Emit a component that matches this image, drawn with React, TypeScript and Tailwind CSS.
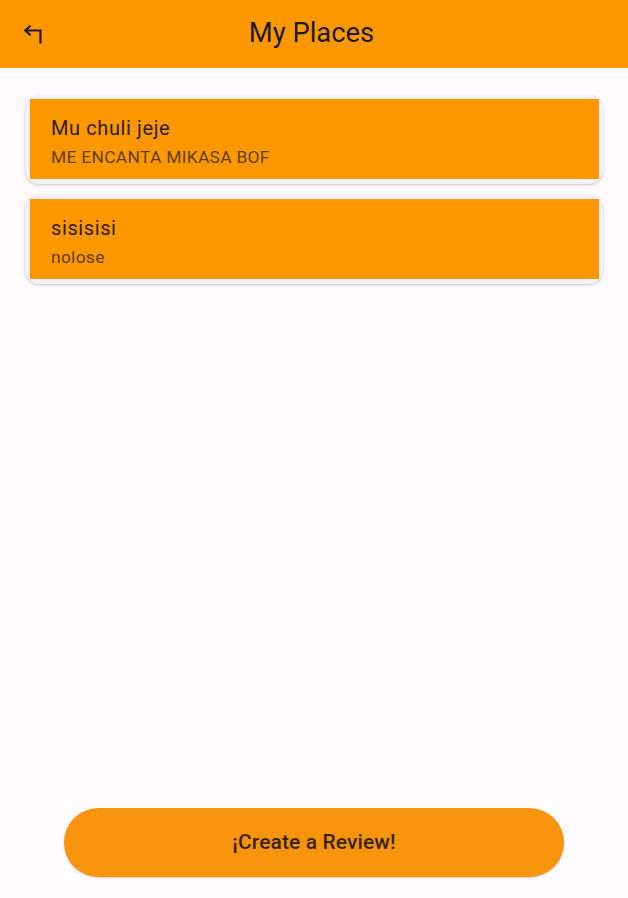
import React from "react";

const places = [
  { title: "Mu chuli jeje", subtitle: "ME ENCANTA MIKASA BOF" },
  { title: "sisisisi", subtitle: "nolose" },
];

export default function App() {
  return (
    <div
      className="w-[628px] h-[898px] bg-[#fffbfe] flex flex-col"
      style={{ fontFamily: "Roboto, 'Noto Sans', sans-serif" }}
    >
      <header className="h-[68px] bg-[#ff9800] flex items-center relative shrink-0">
        <button className="w-[44px] h-[44px] ml-[11px] flex items-center justify-center">
          <svg width="22" height="22" viewBox="0 0 22 22" fill="none">
            <path d="M18.5 20.5V7.5H4" stroke="#1d1b20" strokeWidth="2.2" />
            <path d="M8.5 2.8L3.3 7.5L8.5 12.2" stroke="#1d1b20" strokeWidth="2.2" />
          </svg>
        </button>
        <h1 className="absolute left-0 right-0 pr-[5px] text-center text-[27.4px] text-[#1d1b20] leading-none pointer-events-none">
          My Places
        </h1>
      </header>

      <main className="flex-1 flex flex-col gap-[11px] px-[25px] pt-[27px]">
        {places.map((p) => (
          <div
            key={p.title}
            className="rounded-[14px] bg-[#f6f1f9] pl-[5px] pr-[4px] pt-[4px] pb-[5px] shadow-[0_1px_3px_rgba(0,0,0,0.22)]"
          >
            <div className="bg-[#ff9800] h-[80px] pl-[21px] pt-[16px] flex flex-col">
              <div className="text-[20px] leading-[26px] tracking-[0.6px] text-[#2e2004]">{p.title}</div>
              <div className="text-[17.4px] leading-[22px] tracking-[0.3px] text-[#5f3f05] mt-[5px]">{p.subtitle}</div>
            </div>
          </div>
        ))}
      </main>

      <div className="flex justify-center pb-[21px]">
        <button className="w-[500px] h-[69px] rounded-full bg-[#f8940a] shadow-[0_1px_2px_rgba(0,0,0,0.2)] text-[21px] font-medium text-[#3a2200] tracking-[0.1px]">
          ¡Create a Review!
        </button>
      </div>
    </div>
  );
}
